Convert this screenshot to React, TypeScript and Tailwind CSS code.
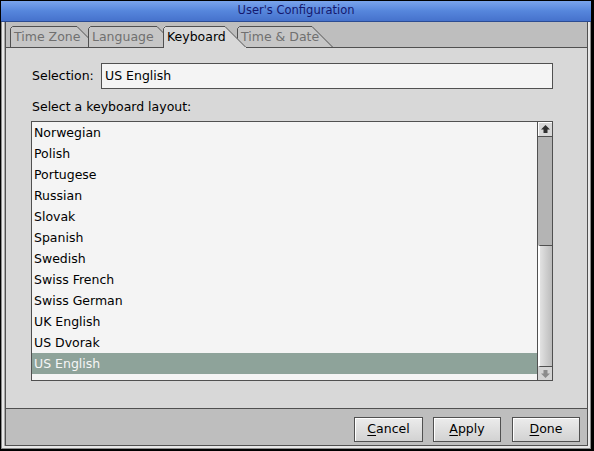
import React from 'react';

const layouts = [
  'Norwegian',
  'Polish',
  'Portugese',
  'Russian',
  'Slovak',
  'Spanish',
  'Swedish',
  'Swiss French',
  'Swiss German',
  'UK English',
  'US Dvorak',
  'US English',
];

const tabs = [
  { name: 'Time Zone', w: 88, box: 'w-[88px] -mr-[10px] z-[1]' },
  { name: 'Language', w: 90, box: 'w-[90px] -mr-[15px] z-[2]' },
  { name: 'Keyboard', w: 83, box: 'w-[83px] -mr-[9px] z-[10]', active: true },
  { name: 'Time & Date', w: 96, box: 'w-[96px] z-[3]' },
];

function Tab({ name, w, box, active }: { name: string; w: number; box: string; active?: boolean }) {
  const h = active ? 22 : 21;
  const t = w - 21;
  return (
    <div className={`relative ${box} ${active ? 'h-[22px] -mb-px' : 'h-[21px]'}`}>
      {/* tab shape with the slanted right edge */}
      <svg className="absolute inset-0" width={w} height={h} viewBox={`0 0 ${w} ${h}`}>
        <polygon
          points={`0,${h} 0,2 2,0 ${t},0 ${t + 21},21 ${t + 21},${h}`}
          fill={active ? '#d8d8d8' : '#c6c6c6'}
        />
        <polyline
          points={`0.5,${h} 0.5,2.5 2.5,0.5 ${t},0.5 ${t + 20.5},21`}
          fill="none"
          stroke="#505050"
          strokeWidth="1"
        />
      </svg>
      <span
        className={`relative block pl-[4px] leading-[21px] whitespace-nowrap ${
          active ? 'text-black' : 'text-[#707070]'
        }`}
      >
        {name}
      </span>
    </div>
  );
}

function Arrow({ down, color }: { down?: boolean; color: string }) {
  return (
    <svg width="9" height="8" viewBox="0 0 9 8" className={down ? 'rotate-180' : ''}>
      <polygon points="4.5,0 9,4.5 6.5,4.5 6.5,8 2.5,8 2.5,4.5 0,4.5" fill={color} />
    </svg>
  );
}

function Button({ label, w }: { label: string; w: string }) {
  return (
    <button
      className={`${w} h-[25px] border border-[#505050] bg-gradient-to-b from-[#ececec] to-[#d2d2d2] shadow-[inset_1px_1px_0_#ffffff] text-black leading-none`}
    >
      <span className="underline underline-offset-2">{label[0]}</span>
      {label.slice(1)}
    </button>
  );
}

export default function App() {
  return (
    <div className="w-[594px] h-[451px] bg-black border-black border-t border-l border-r-[3px] border-b-2 flex flex-col font-['DejaVu_Sans',sans-serif] text-[12.5px] text-black">
      {/* Title bar */}
      <div className="h-[21px] shrink-0 bg-gradient-to-b from-[#7aa4ec] via-[#5686dc] to-[#4672cc] border-b border-[#2c4c92] flex items-center justify-center">
        <span className="text-[11.5px] text-[#14186e] leading-none">User's Configuration</span>
      </div>

      {/* Window frame */}
      <div className="flex-1 flex bg-[#e8e8e8] border-x border-b border-[#8a8a8a] px-[2px] pb-[2px]">
        <div className="flex-1 flex border-l border-[#a8a8a8]">
          <div className="flex-1 flex flex-col border-l border-r border-b border-[#505050]">
            {/* Tab strip */}
            <div className="h-[25px] shrink-0 bg-[#bebebe] flex items-end pl-[4px] relative z-10">
              {tabs.map((t) => (
                <Tab key={t.name} {...t} />
              ))}
            </div>

            {/* Keyboard page */}
            <div className="h-[362px] shrink-0 bg-[#d8d8d8] border-y border-[#505050] flex flex-col">
              <div className="flex items-center mt-[15px] pl-[26px]">
                <span className="w-[69px]">Selection:</span>
                <div className="w-[452px] h-[26px] border border-[#505050] bg-[#f4f4f4] flex items-center pl-[3px]">
                  US English
                </div>
              </div>

              <div className="mt-[10px] pl-[26px] leading-[15px]">Select a keyboard layout:</div>

              <div className="mt-[7px] ml-[25px] w-[522px] h-[260px] border border-[#505050] bg-[#f4f4f4] flex">
                <ul className="flex-1 flex flex-col">
                  {layouts.map((name) => (
                    <li
                      key={name}
                      className={`h-[21px] leading-[21px] pl-[2px] ${
                        name === 'US English' ? 'bg-[#8ea39a] text-[#f6f6f6]' : ''
                      }`}
                    >
                      {name}
                    </li>
                  ))}
                </ul>

                {/* Scrollbar */}
                <div className="w-[15px] border-l border-[#505050] flex flex-col">
                  <div className="h-[15px] bg-[#d8d8d8] border-b border-[#505050] shadow-[inset_1px_1px_0_#ffffff] flex items-center justify-center">
                    <Arrow color="#303030" />
                  </div>
                  <div className="h-[108px] bg-[#b4b4b4]" />
                  <div className="h-[122px] border-y border-[#505050] border-l-2 border-l-white bg-gradient-to-r from-[#e2e2e2] to-[#bcbcbc]" />
                  <div className="flex-1 bg-[#d4d4d4] flex items-center justify-center">
                    <Arrow down color="#8c8c8c" />
                  </div>
                </div>
              </div>
            </div>

            {/* Button bar */}
            <div className="flex-1 bg-[#bebebe] flex justify-end items-start pt-[8px] pr-[7px]">
              <Button label="Cancel" w="w-[69px]" />
              <div className="w-[10px]" />
              <Button label="Apply" w="w-[68px]" />
              <div className="w-[11px]" />
              <Button label="Done" w="w-[68px]" />
            </div>
          </div>
        </div>
      </div>
    </div>
  );
}
